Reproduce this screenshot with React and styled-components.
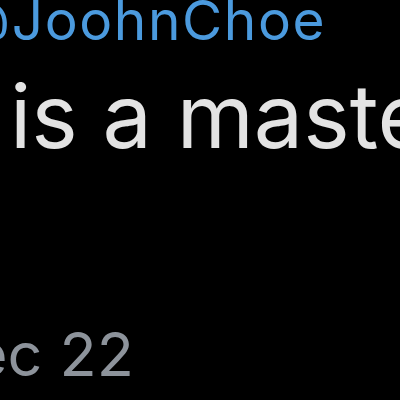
import React from 'react';
import styled, { createGlobalStyle } from 'styled-components';

const Global = createGlobalStyle`
  html, body { margin: 0; padding: 0; background: #000; }
  body { width: 400px; height: 400px; overflow: hidden; }
`;

const Page = styled.div`
  width: 400px;
  height: 400px;
  overflow: hidden;
  background: #000;
  font-family: Inter, "Liberation Sans", sans-serif;
  display: flex;
  flex-direction: column;
`;

const Line = styled.div`
  white-space: nowrap;
  line-height: 1;
  font-size: ${p => p.$size}px;
  font-weight: ${p => p.$weight || 400};
  color: ${p => p.$color};
  letter-spacing: ${p => p.$track || 0}px;
  margin-left: ${p => p.$shift}px;
  margin-top: ${p => p.$top}px;
`;

export default function App() {
  return (
    <Page>
      <Global />
      <Line $size={55} $weight={400} $color="#4b9ade" $track={1.6} $shift={-43} $top={-7}>@JoohnChoe</Line>
      <Line $size={88} $color="#e3e3e3" $track={0} $shift={10} $top={24}>is a masterpiece</Line>
      <Line $size={61} $color="#8d939b" $track={0} $shift={-72} $top={164}>Dec 22</Line>
    </Page>
  );
}
